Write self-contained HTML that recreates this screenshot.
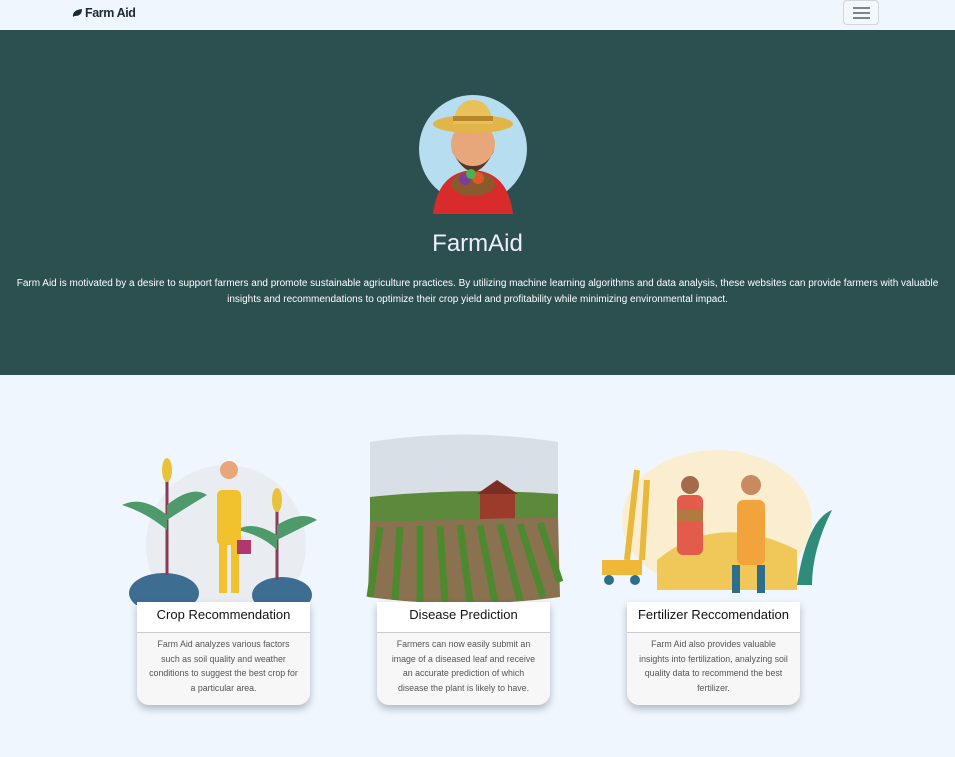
<!DOCTYPE html>
<html><head><meta charset="utf-8"><style>
*{margin:0;padding:0;box-sizing:border-box}
body{width:955px;height:757px;background:#eff6fe;font-family:"Liberation Sans",sans-serif;overflow:hidden;position:relative}
.nav{height:30px;position:relative}
.brand{position:absolute;left:72px;top:6px;font-weight:bold;font-size:12.5px;color:#1e2b2e;letter-spacing:-0.4px}
.brand svg{vertical-align:-1px;margin-right:2px}
.tog{position:absolute;left:843px;top:0;width:36px;height:25px;border:1px solid #cfd6dc;border-radius:4px;background:#f4f7fb}
.tog i{position:absolute;left:9px;width:17px;height:2px;background:#7d858c}
.hero{position:absolute;top:30px;left:0;width:955px;height:345px;background:#2c4f4f;color:#fff;text-align:center}
.hero h1{position:absolute;top:200px;width:100%;font-weight:300;font-size:24px;color:#eef}
.hero p{position:absolute;top:246px;left:10px;right:10px;font-size:10px;line-height:16px}
.card{position:absolute;top:602px;width:173px;height:103px;background:#f7f7f7;border-radius:0 0 12px 12px;box-shadow:0 4px 8px rgba(0,0,0,.25);text-align:center}
.card h3{height:31px;background:#fff;border-bottom:1px solid #ccc;font-size:13px;font-weight:normal;color:#111;line-height:26px}
.card p{font-size:8.8px;color:#555;line-height:14.5px;padding:4px 11px}
svg.ill{position:absolute}
</style></head><body>
<div class="nav"><div class="brand"><svg width="11" height="10" viewBox="0 0 11 10"><path d="M1 9 Q0 2 10 1 Q10 8 3 8 Q2 8 1 9Z" fill="#1e2b2e"/></svg>Farm Aid</div><div class="tog"><i style="top:6px"></i><i style="top:11px"></i><i style="top:16px"></i></div></div>
<div class="hero">
<svg style="position:absolute;left:418px;top:64px" width="110" height="120" viewBox="0 0 110 120">
<circle cx="55" cy="55" r="54" fill="#b7ddf0"/>
<path d="M15 120 Q20 78 55 76 Q90 78 95 120Z" fill="#d92b2b"/>
<circle cx="55" cy="50" r="22" fill="#e8a77a"/>
<path d="M33 55 Q55 100 77 55 Q70 72 55 72 Q40 72 33 55Z" fill="#5a3422"/>
<ellipse cx="55" cy="30" rx="40" ry="9" fill="#e2b548"/>
<path d="M35 30 Q38 6 55 6 Q72 6 75 30Z" fill="#e8c15b"/>
<rect x="35" y="22" width="40" height="5" fill="#b8862a"/>
<ellipse cx="55" cy="90" rx="22" ry="12" fill="#8a5a2c"/>
<circle cx="47" cy="85" r="6" fill="#7c3f98"/><circle cx="60" cy="84" r="6" fill="#e0582a"/><circle cx="53" cy="80" r="5" fill="#4caf50"/>
</svg>
<h1>FarmAid</h1>
<p>Farm Aid is motivated by a desire to support farmers and promote sustainable agriculture practices. By utilizing machine learning algorithms and data analysis, these websites can provide farmers with valuable insights and recommendations to optimize their crop yield and profitability while minimizing environmental impact.</p>
</div>

<svg class="ill" style="left:112px;top:435px" width="228" height="170" viewBox="0 0 228 170">
<circle cx="114" cy="110" r="80" fill="#e9edf1"/>
<ellipse cx="52" cy="158" rx="35" ry="20" fill="#3d6e92"/><ellipse cx="170" cy="160" rx="30" ry="18" fill="#3d6e92"/>
<path d="M55 140 L55 30" stroke="#8b3a55" stroke-width="3"/><path d="M165 145 L165 60" stroke="#8b3a55" stroke-width="3"/>
<path d="M55 80 Q30 60 10 70 Q35 78 55 95Z M55 70 Q80 50 95 60 Q75 72 55 85Z M165 100 Q140 85 125 95 Q150 100 165 115Z M165 90 Q190 75 205 85 Q185 95 165 105Z" fill="#4f9a6b"/>
<ellipse cx="55" cy="35" rx="5" ry="12" fill="#e8c33a"/><ellipse cx="165" cy="65" rx="5" ry="12" fill="#e8c33a"/>
<rect x="105" y="55" width="24" height="55" rx="5" fill="#f2c12e"/><circle cx="117" cy="35" r="9" fill="#e8a77a"/><rect x="107" y="108" width="8" height="50" fill="#f2c12e"/><rect x="119" y="108" width="8" height="50" fill="#f2c12e"/>
<rect x="125" y="105" width="14" height="14" fill="#b0386d"/>
</svg>
<svg class="ill" style="left:365px;top:432px" width="198" height="172" viewBox="0 0 198 172">
<path d="M5 10 Q100 -5 193 10 L193 70 L5 70Z" fill="#d9dfe6"/>
<path d="M5 65 Q100 55 193 62 L193 100 L5 100Z" fill="#5d8a3a"/>
<rect x="115" y="60" width="35" height="28" fill="#9b3b2b"/><path d="M112 62 L132 48 L153 62Z" fill="#7d2e22"/>
<path d="M5 90 L193 85 L195 165 Q100 178 3 165Z" fill="#8a7150"/>
<g stroke="#4d8a2f" stroke-width="7">
<path d="M15 95 L5 165"/><path d="M35 95 L30 168"/><path d="M55 94 L55 170"/><path d="M75 94 L80 170"/><path d="M95 93 L105 170"/><path d="M115 93 L130 170"/><path d="M135 92 L155 168"/><path d="M155 92 L178 165"/><path d="M175 91 L195 150"/></g>
</svg>
<svg class="ill" style="left:597px;top:440px" width="235" height="160" viewBox="0 0 235 160">
<ellipse cx="120" cy="80" rx="95" ry="70" fill="#fbeed0"/>
<path d="M60 120 Q120 70 200 110 L200 150 L60 150Z" fill="#f0c85a"/>
<path d="M30 120 L40 30 M45 120 L50 40" stroke="#e8b83a" stroke-width="6"/>
<path d="M200 145 Q210 80 235 70 Q215 110 215 145Z" fill="#2f8c7a"/>
<rect x="80" y="55" width="26" height="60" rx="6" fill="#e35b4b"/><circle cx="93" cy="45" r="9" fill="#a56b48"/><rect x="80" y="70" width="26" height="12" fill="#b07a40"/>
<rect x="140" y="60" width="28" height="65" rx="6" fill="#f1a33c"/><circle cx="154" cy="45" r="10" fill="#c98a60"/>
<rect x="135" y="125" width="8" height="28" fill="#2d6e8a"/><rect x="160" y="125" width="8" height="28" fill="#2d6e8a"/>
<rect x="5" y="120" width="40" height="15" fill="#f0b838"/><circle cx="12" cy="140" r="5" fill="#2d6e8a"/><circle cx="38" cy="140" r="5" fill="#2d6e8a"/>
</svg>

<div class="card" style="left:137px"><h3>Crop Recommendation</h3><p>Farm Aid analyzes various factors such as soil quality and weather conditions to suggest the best crop for a particular area.</p></div>
<div class="card" style="left:377px"><h3>Disease Prediction</h3><p>Farmers can now easily submit an image of a diseased leaf and receive an accurate prediction of which disease the plant is likely to have.</p></div>
<div class="card" style="left:627px"><h3>Fertilizer Reccomendation</h3><p>Farm Aid also provides valuable insights into fertilization, analyzing soil quality data to recommend the best fertilizer.</p></div>
</body></html>
